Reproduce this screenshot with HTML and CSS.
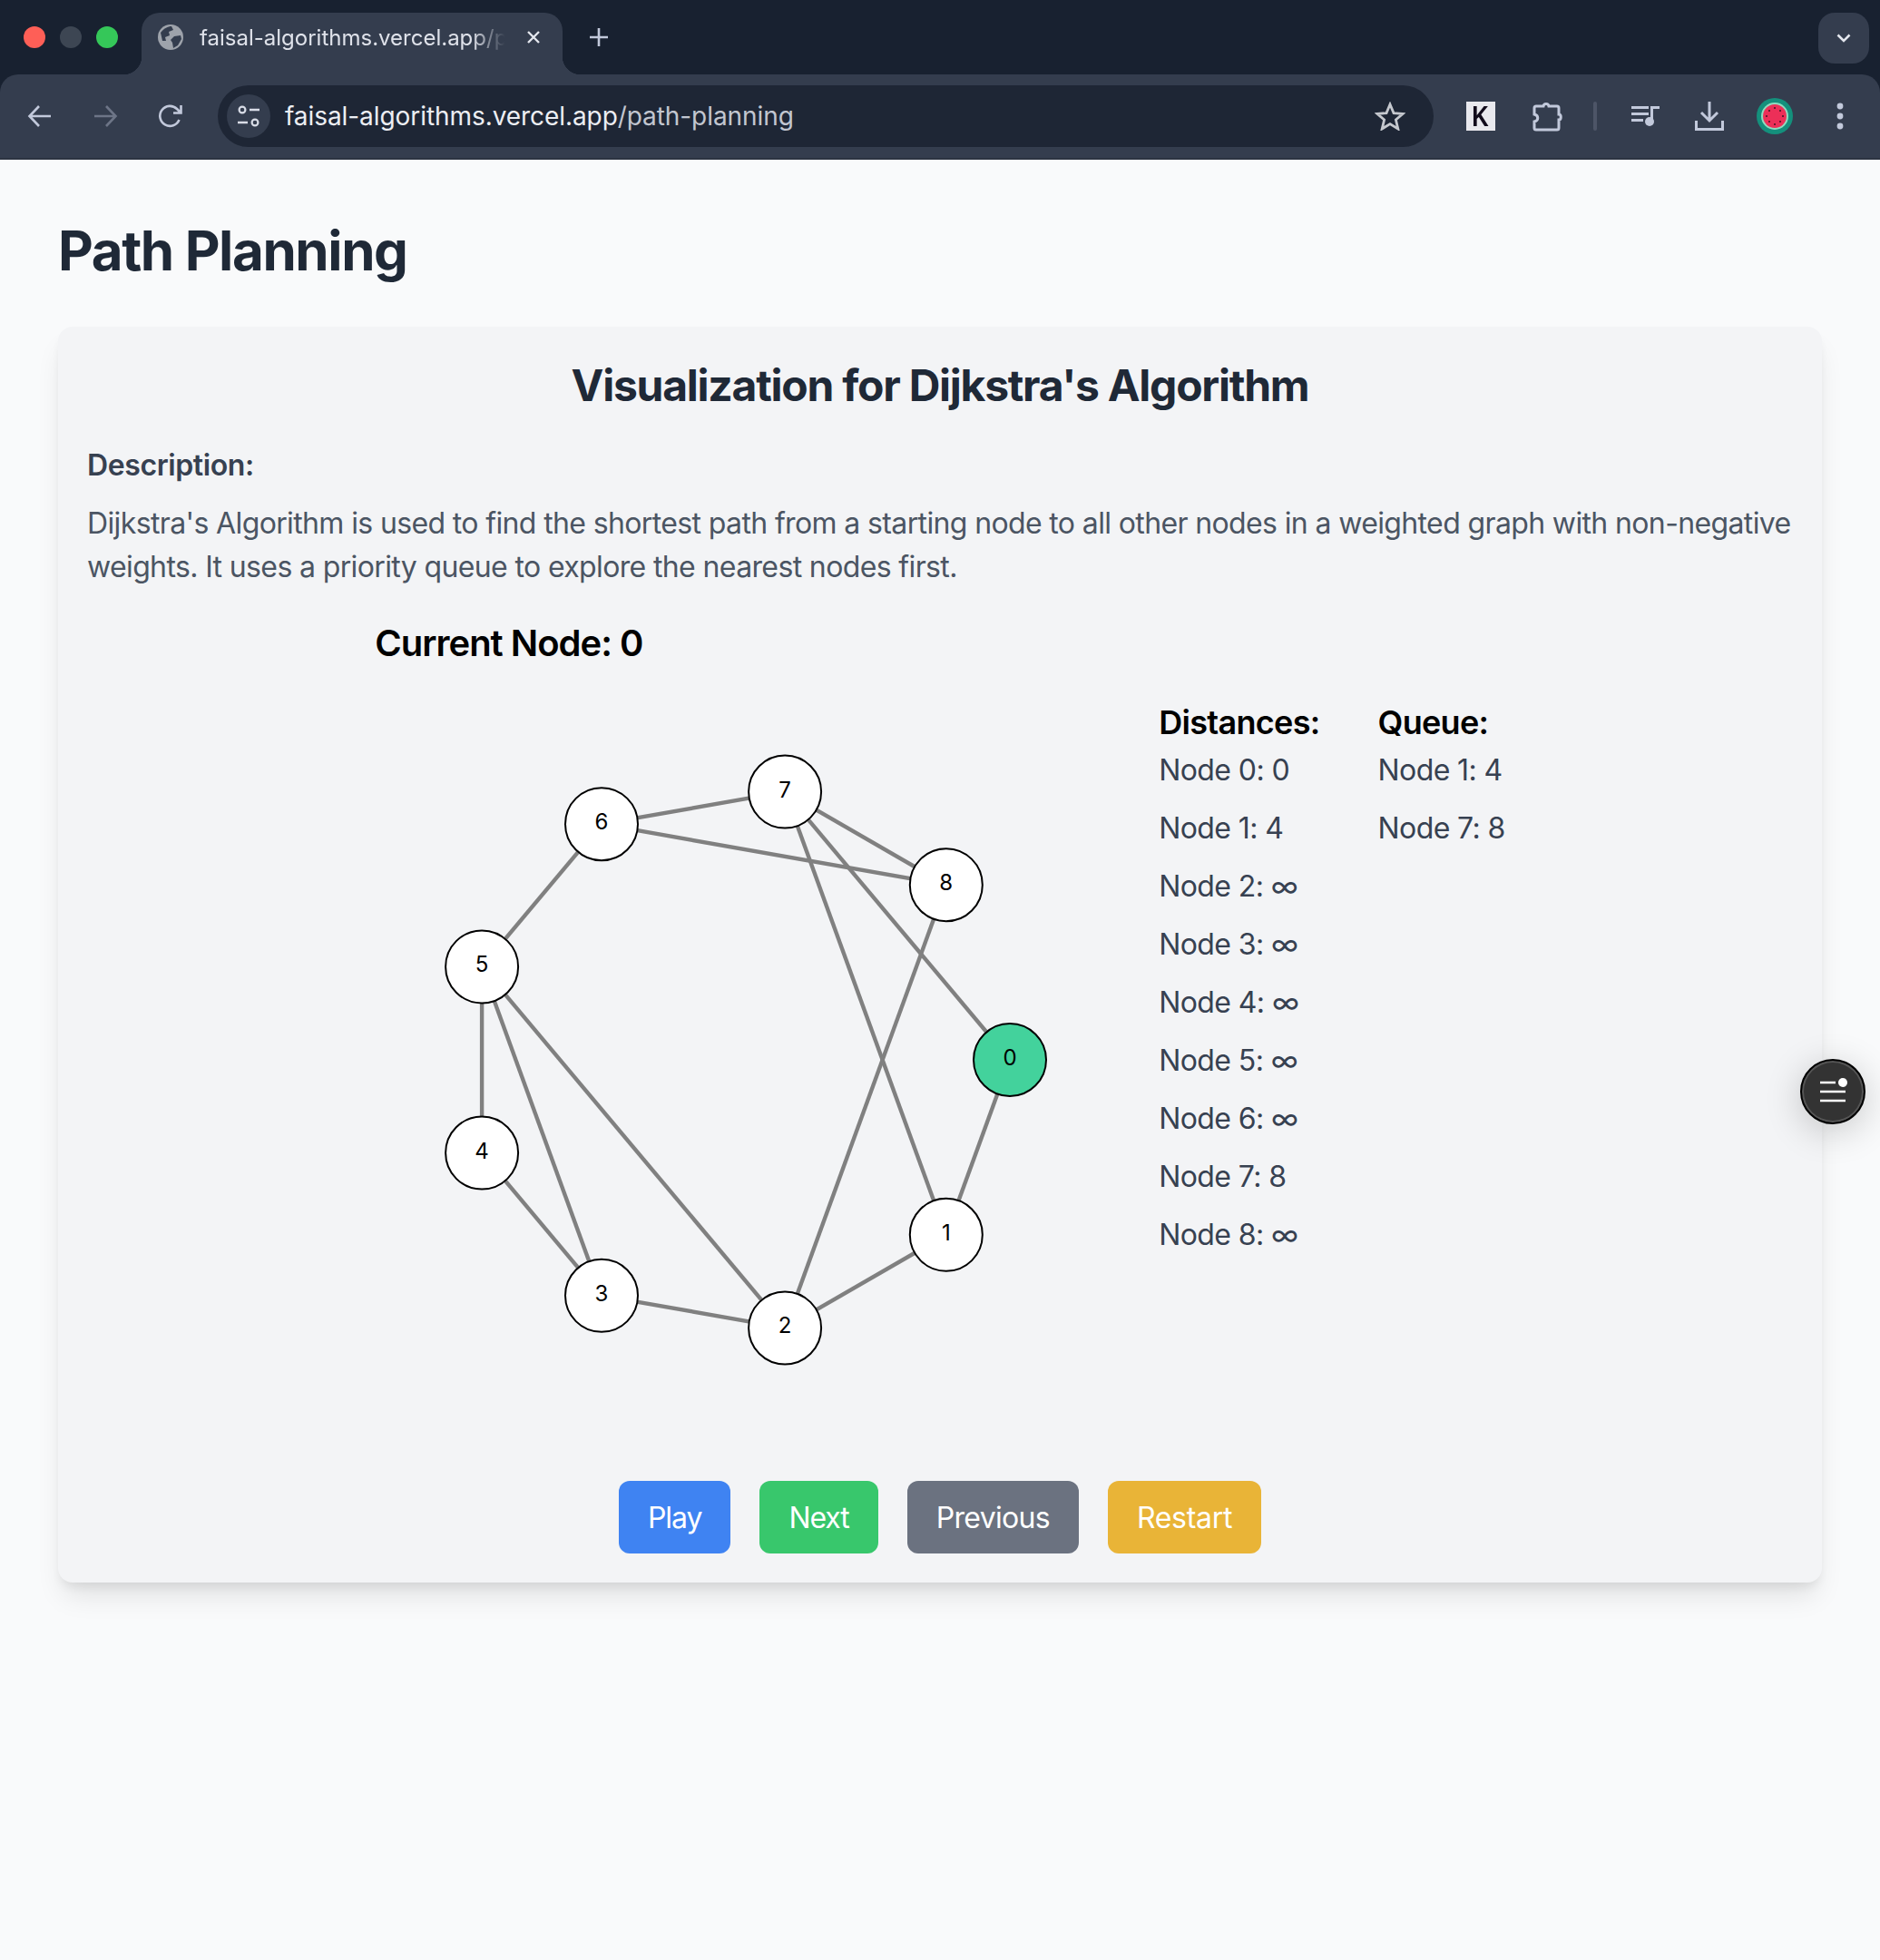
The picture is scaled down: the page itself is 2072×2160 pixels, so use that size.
FILE: index.html
```html
<!DOCTYPE html>
<html lang="en">
<head>
    <meta charset="UTF-8">
    <meta name="viewport" content="width=device-width, initial-scale=1.0">
    <title>Path Planning</title>
    <link rel="stylesheet" href="styles.css">
</head>
<body>
    <header class="browser">
        <div class="tab-bar">
            <div class="lights">
                <span class="light light-red"></span>
                <span class="light light-off"></span>
                <span class="light light-green"></span>
            </div>
            <div class="tab">
                <svg class="favicon" width="30" height="30" viewBox="0 0 30 30">
                    <circle cx="15" cy="15" r="14" fill="#9ea3ab"/>
                    <path d="M4 10 C8 5 12 3 16 3 L18 7 L13 9 L14 13 L9 15 L10 19 L6 19 Z" fill="#343d4e"/>
                    <path d="M19 14 L26 13 L27 17 L23 24 L18 27 L17 21 L15 18 Z" fill="#343d4e"/>
                </svg>
                <span class="tab-title">faisal-algorithms.vercel.app/p</span>
                <svg class="tab-close" width="16" height="16" viewBox="0 0 16 16">
                    <path d="M2 2 L14 14 M14 2 L2 14" stroke="#e4e7ee" stroke-width="2.4" fill="none"/>
                </svg>
            </div>
            <svg class="new-tab" width="22" height="22" viewBox="0 0 22 22">
                <path d="M11 1 V21 M1 11 H21" stroke="#c2c9db" stroke-width="2.6" fill="none"/>
            </svg>
            <div class="tab-menu">
                <svg width="16" height="10" viewBox="0 0 16 10">
                    <path d="M1.5 1.5 L8 8 L14.5 1.5" stroke="#e4e7ee" stroke-width="2.6" fill="none"/>
                </svg>
            </div>
        </div>

        <div class="toolbar">
            <div class="tool">
                <svg width="28" height="26" viewBox="0 0 28 26"><path d="M26 13 H3 M13 2 L2.5 13 L13 24" stroke="#c2c9db" stroke-width="2.6" fill="none"/></svg>
            </div>
            <div class="tool">
                <svg width="28" height="26" viewBox="0 0 28 26"><path d="M2 13 H25 M15 2 L25.5 13 L15 24" stroke="#6d7587" stroke-width="2.6" fill="none"/></svg>
            </div>
            <div class="tool">
                <svg width="28" height="28" viewBox="0 0 28 28"><path d="M23.5 18 A11 11 0 1 1 21 6 L25 10 M25.5 2 V10.5 H17" stroke="#c2c9db" stroke-width="2.6" fill="none"/></svg>
            </div>

            <div class="omnibox">
                <div class="site-info">
                    <svg width="26" height="26" viewBox="0 0 26 26">
                        <circle cx="6" cy="6" r="3.4" stroke="#d8dce6" stroke-width="2.2" fill="none"/>
                        <path d="M14 6 H25 M1 20 H12" stroke="#d8dce6" stroke-width="2.6" fill="none"/>
                        <circle cx="20" cy="20" r="3.4" stroke="#d8dce6" stroke-width="2.2" fill="none"/>
                    </svg>
                </div>
                <span class="url">faisal-algorithms.vercel.app<span class="url-path">/path-planning</span></span>
                <svg class="star" width="34" height="32" viewBox="0 0 34 32">
                    <path d="M17 3 L21 12.6 L31.2 13.4 L23.4 20 L25.8 30 L17 24.6 L8.2 30 L10.6 20 L2.8 13.4 L13 12.6 Z" stroke="#c5c8ce" stroke-width="2.8" fill="none"/>
                </svg>
            </div>

            <div class="tool"><span class="k-icon"><span class="k-letter">K</span></span></div>
            <div class="tool tool-puzzle">
                <svg width="34" height="34" viewBox="0 0 34 34">
                    <path d="M5 6 H13 C13.5 2.5 18.5 2.5 19 6 H28 Q30 6 30 8 V15 C33 15 33 21 30 21 V30 Q30 32 28 32 H5 Q3 32 3 30 V23 C8 22 8 16 3 15 V8 Q3 6 5 6 Z" stroke="#c2c9db" stroke-width="3" fill="none"/>
                </svg>
            </div>
            <div class="tool-divider"></div>
            <div class="tool tool-music">
                <svg width="32" height="24" viewBox="0 0 32 24" fill="#c2c9db">
                    <rect x="0" y="1" width="19" height="3"/>
                    <rect x="0" y="8" width="19" height="3"/>
                    <rect x="0" y="15" width="13" height="3"/>
                    <rect x="21" y="1" width="10" height="3"/>
                    <rect x="21" y="1" width="3" height="18"/>
                    <circle cx="20" cy="18" r="5"/>
                </svg>
            </div>
            <div class="tool">
                <svg width="32" height="32" viewBox="0 0 32 32">
                    <path d="M16 0 V20 M7 12 L16 21 L25 12" stroke="#c2c9db" stroke-width="3" fill="none"/>
                    <path d="M1.5 21 V30.5 H30.5 V21" stroke="#c2c9db" stroke-width="3" fill="none"/>
                </svg>
            </div>
            <div class="tool">
                <svg width="40" height="40" viewBox="0 0 40 40">
                    <circle cx="20" cy="20" r="20" fill="#14907c"/>
                    <circle cx="20" cy="20" r="15" fill="#8fdcc0"/>
                    <circle cx="20" cy="20" r="13" fill="#ec2f58"/>
                    <g fill="#3a1520">
                        <circle cx="20" cy="11" r="1"/><circle cx="20" cy="29" r="1"/>
                        <circle cx="11" cy="20" r="1"/><circle cx="29" cy="20" r="1"/>
                        <circle cx="14" cy="14" r="1"/><circle cx="26" cy="14" r="1"/>
                        <circle cx="14" cy="26" r="1"/><circle cx="26" cy="26" r="1"/>
                    </g>
                </svg>
            </div>
            <div class="tool">
                <svg width="8" height="30" viewBox="0 0 8 30" fill="#c2c9db">
                    <circle cx="4" cy="4" r="3.4"/><circle cx="4" cy="15" r="3.4"/><circle cx="4" cy="26" r="3.4"/>
                </svg>
            </div>
        </div>
    </header>

    <main class="page">
        <h1 class="page-title">Path Planning</h1>

        <section class="card">
            <h2 class="card-title">Visualization for Dijkstra's Algorithm</h2>
            <h3 class="desc-label">Description:</h3>
            <p class="desc-text">Dijkstra's Algorithm is used to find the shortest path from a starting node to all other nodes in a weighted graph with non-negative weights. It uses a priority queue to explore the nearest nodes first.</p>

            <div class="viz">
                <div class="viz-inner">
                    <h3 class="current-node">Current Node: 0</h3>
                    <div class="viz-row">
                        <svg class="graph" width="800" height="800" viewBox="0 0 800 800">
                            <g class="edges">
                                <line x1="700" y1="400" x2="629.8" y2="592.8"/>
                                <line x1="700" y1="400" x2="452.1" y2="104.6"/>
                                <line x1="629.8" y1="592.8" x2="452.1" y2="695.4"/>
                                <line x1="629.8" y1="592.8" x2="452.1" y2="104.6"/>
                                <line x1="452.1" y1="695.4" x2="250" y2="659.8"/>
                                <line x1="452.1" y1="695.4" x2="118.1" y2="297.4"/>
                                <line x1="452.1" y1="695.4" x2="629.8" y2="207.2"/>
                                <line x1="250" y1="659.8" x2="118.1" y2="502.6"/>
                                <line x1="250" y1="659.8" x2="118.1" y2="297.4"/>
                                <line x1="118.1" y1="502.6" x2="118.1" y2="297.4"/>
                                <line x1="118.1" y1="297.4" x2="250" y2="140.2"/>
                                <line x1="250" y1="140.2" x2="452.1" y2="104.6"/>
                                <line x1="250" y1="140.2" x2="629.8" y2="207.2"/>
                                <line x1="452.1" y1="104.6" x2="629.8" y2="207.2"/>
                            </g>
                            <g class="nodes">
                                <circle class="node-current" cx="700" cy="400" r="40"/><text x="700" y="406">0</text>
                                <circle cx="629.8" cy="592.8" r="40"/><text x="629.8" y="598.8">1</text>
                                <circle cx="452.1" cy="695.4" r="40"/><text x="452.1" y="701.4">2</text>
                                <circle cx="250" cy="659.8" r="40"/><text x="250" y="665.8">3</text>
                                <circle cx="118.1" cy="502.6" r="40"/><text x="118.1" y="508.6">4</text>
                                <circle cx="118.1" cy="297.4" r="40"/><text x="118.1" y="303.4">5</text>
                                <circle cx="250" cy="140.2" r="40"/><text x="250" y="146.2">6</text>
                                <circle cx="452.1" cy="104.6" r="40"/><text x="452.1" y="110.6">7</text>
                                <circle cx="629.8" cy="207.2" r="40"/><text x="629.8" y="213.2">8</text>
                            </g>
                        </svg>
                        <div class="info-col">
                            <h3 class="info-title">Distances:</h3>
                            <ul class="info-list">
                                <li>Node 0: 0</li>
                                <li>Node 1: 4</li>
                                <li>Node 2: ∞</li>
                                <li>Node 3: ∞</li>
                                <li>Node 4: ∞</li>
                                <li>Node 5: ∞</li>
                                <li>Node 6: ∞</li>
                                <li>Node 7: 8</li>
                                <li>Node 8: ∞</li>
                            </ul>
                        </div>
                        <div class="info-col">
                            <h3 class="info-title">Queue:</h3>
                            <ul class="info-list">
                                <li>Node 1: 4</li>
                                <li>Node 7: 8</li>
                            </ul>
                        </div>
                    </div>
                </div>
            </div>

            <div class="controls">
                <button class="btn btn-play">Play</button>
                <button class="btn btn-next">Next</button>
                <button class="btn btn-prev">Previous</button>
                <button class="btn btn-restart">Restart</button>
            </div>
        </section>
    </main>

    <button class="float-btn" aria-label="Menu">
        <svg width="32" height="30" viewBox="0 0 32 30">
            <path d="M2 5 H19 M2 15 H30 M2 25 H30" stroke="#fff" stroke-width="2.6" fill="none"/>
            <circle cx="27" cy="5" r="5" fill="#fff"/>
        </svg>
    </button>
</body>
</html>
```

FILE: styles.css
```css
* {
    box-sizing: border-box;
}

body {
    margin: 0;
    min-height: 2160px;
    position: relative;
    font-family: Inter, "Noto Sans", sans-serif;
    background-color: #f9fafb;
}

/* browser chrome */
.browser {
    background-color: #182130;
}

.tab-bar {
    display: flex;
    align-items: flex-end;
    height: 82px;
    padding: 0 12px 0 26px;
}

.lights {
    display: flex;
    gap: 16px;
    align-self: flex-start;
    margin-top: 29px;
    margin-right: 26px;
}

.light {
    width: 24px;
    height: 24px;
    border-radius: 50%;
}

.light-red {
    background-color: #fe5f57;
}

.light-off {
    background-color: #3d4653;
}

.light-green {
    background-color: #35c759;
}

.tab {
    position: relative;
    display: flex;
    align-items: center;
    width: 464px;
    height: 68px;
    padding: 0 0 14px 17px;
    background-color: #343d4e;
    border-radius: 20px 20px 0 0;
}

.tab::before,
.tab::after {
    content: "";
    position: absolute;
    bottom: 0;
    width: 20px;
    height: 20px;
}

.tab::before {
    left: -20px;
    background: radial-gradient(circle at 0 0, transparent 20px, #343d4e 20.5px);
}

.tab::after {
    right: -20px;
    background: radial-gradient(circle at 100% 0, transparent 20px, #343d4e 20.5px);
}

.favicon {
    flex: none;
}

.tab-title {
    flex: none;
    width: 340px;
    margin-left: 17px;
    overflow: hidden;
    white-space: nowrap;
    font-size: 24px;
    color: #dfe2ea;
    -webkit-mask-image: linear-gradient(to right, #000 88%, transparent 99%);
    mask-image: linear-gradient(to right, #000 88%, transparent 99%);
}

.tab-close {
    flex: none;
    margin-left: 20px;
}

.new-tab {
    align-self: flex-start;
    margin-top: 30px;
    margin-left: 29px;
}

.tab-menu {
    display: flex;
    align-items: center;
    justify-content: center;
    align-self: flex-start;
    width: 56px;
    height: 56px;
    margin-top: 14px;
    margin-left: auto;
    background-color: #343d4e;
    border-radius: 18px;
}

.toolbar {
    display: flex;
    align-items: center;
    height: 94px;
    padding: 0 8px;
    background-color: #343d4e;
    border-bottom: 2px solid #2c3442;
    border-radius: 20px 20px 0 0;
}

.tool {
    display: flex;
    flex: none;
    align-items: center;
    justify-content: center;
    width: 72px;
}

.tool-puzzle {
    padding-left: 2px;
}

.tool-music {
    padding-left: 4px;
}

.tool-divider {
    flex: none;
    width: 4px;
    height: 32px;
    margin: 0 16px;
    background-color: #4d5567;
    border-radius: 2px;
}

.k-icon {
    display: block;
    width: 32px;
    height: 32px;
    background-color: #e9e9ee;
    font-family: "Liberation Sans", sans-serif;
    font-size: 32px;
    font-weight: 700;
    line-height: 32px;
    text-align: center;
    color: #120c1c;
}

.k-letter {
    display: inline-block;
    transform: scaleX(0.8);
}

.omnibox {
    display: flex;
    flex: 1;
    align-items: center;
    height: 68px;
    margin: 0 16px;
    padding: 0 31px 0 10px;
    background-color: #1e2635;
    border-radius: 34px;
}

.site-info {
    display: flex;
    flex: none;
    align-items: center;
    justify-content: center;
    width: 48px;
    height: 48px;
    background-color: #343d4e;
    border-radius: 50%;
}

.url {
    flex: 1;
    margin-left: 16px;
    font-size: 28px;
    letter-spacing: -0.07px;
    color: #eceef3;
}

.url-path {
    color: #c2c6d0;
}

.star {
    flex: none;
}

/* page */
.page {
    padding: 64px;
}

.page-title {
    margin: 0 0 48px;
    font-size: 60px;
    font-weight: 700;
    line-height: 72px;
    letter-spacing: -1.4px;
    color: #1f2937;
}

.card {
    padding: 33px 32px 32px;
    background-color: #f3f4f6;
    border-radius: 16px;
    box-shadow: 0 20px 30px -6px rgba(0, 0, 0, 0.1), 0 8px 12px -4px rgba(0, 0, 0, 0.08);
}

.card-title {
    margin: 0 0 32px;
    font-size: 48px;
    font-weight: 700;
    line-height: 64px;
    letter-spacing: -1.25px;
    text-align: center;
    color: #1f2937;
}

.desc-label {
    margin: 0 0 16px;
    font-size: 32px;
    font-weight: 600;
    line-height: 48px;
    letter-spacing: -0.4px;
    color: #374151;
}

.desc-text {
    margin: 0 0 32px;
    font-size: 32px;
    line-height: 48px;
    letter-spacing: -0.63px;
    color: #4b5563;
}

.viz {
    display: flex;
    justify-content: center;
}

.current-node {
    margin: 0 0 31px;
    font-size: 40px;
    font-weight: 600;
    line-height: 56px;
    letter-spacing: -1px;
    color: #000;
}

.viz-row {
    display: flex;
    gap: 64px;
}

.graph {
    display: block;
}

.edges line {
    stroke: #808080;
    stroke-width: 4.4;
}

.nodes circle {
    fill: #fff;
    stroke: #000;
    stroke-width: 2;
}

.nodes .node-current {
    fill: #43d29c;
}

.nodes text {
    font-size: 24px;
    text-anchor: middle;
    fill: #000;
}

.info-title {
    margin: 0;
    font-size: 36px;
    font-weight: 600;
    line-height: 56px;
    letter-spacing: -0.7px;
    color: #000;
}

.info-list {
    margin: 0;
    padding: 1px 0 0;
    list-style: none;
}

.info-list li {
    margin-bottom: 16px;
    font-size: 32px;
    line-height: 48px;
    letter-spacing: -0.6px;
    color: #374151;
}

.controls {
    display: flex;
    justify-content: center;
    gap: 32px;
    margin-top: 64px;
}

.btn {
    height: 80px;
    padding: 0 32px;
    border: none;
    border-radius: 12px;
    font-family: inherit;
    font-size: 32px;
    letter-spacing: -0.7px;
    color: #fff;
    cursor: pointer;
}

.btn-play {
    background-color: #3f83f2;
    letter-spacing: -1.05px;
}

.btn-next {
    background-color: #38c76c;
    letter-spacing: -1.05px;
}

.btn-prev {
    background-color: #6b7280;
}

.btn-restart {
    background-color: #e9b437;
    letter-spacing: -0.3px;
}

.float-btn {
    position: absolute;
    top: 1167px;
    right: 16px;
    display: flex;
    align-items: center;
    justify-content: center;
    width: 72px;
    height: 72px;
    padding: 0;
    background-color: #333;
    border: 2px solid #000;
    border-radius: 50%;
    box-shadow: inset 0 0 0 2px #555, 0 8px 40px rgba(0, 0, 0, 0.2);
}
```
